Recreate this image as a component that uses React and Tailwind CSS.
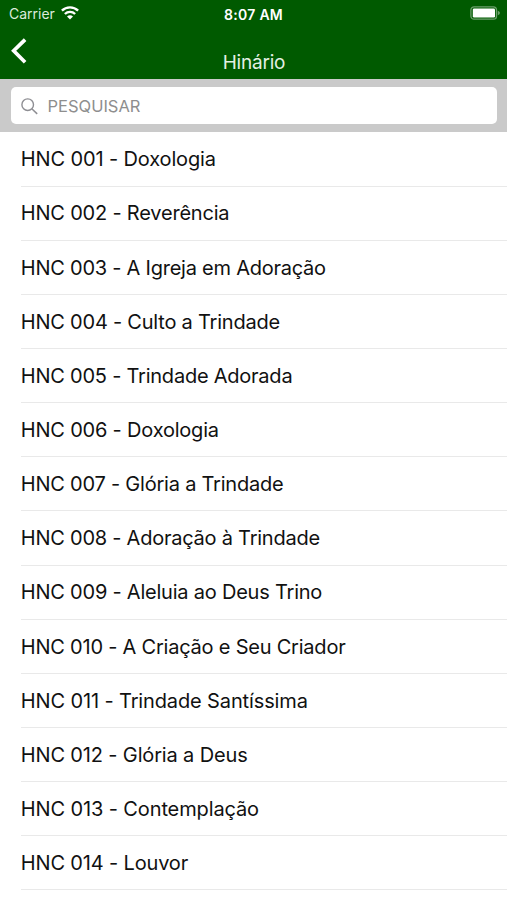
import { useState } from "react";

const hymns = [
    { title: "HNC 001 - Doxologia", tracking: "tracking-[-0.13px]" },
    { title: "HNC 002 - Reverência", tracking: "tracking-[-0.2px]" },
    { title: "HNC 003 - A Igreja em Adoração", tracking: "tracking-[-0.24px]" },
    { title: "HNC 004 - Culto a Trindade", tracking: "tracking-[-0.22px]" },
    { title: "HNC 005 - Trindade Adorada", tracking: "tracking-[-0.23px]" },
    { title: "HNC 006 - Doxologia", tracking: "tracking-[-0.2px]" },
    { title: "HNC 007 - Glória a Trindade", tracking: "tracking-[-0.22px]" },
    { title: "HNC 008 - Adoração à Trindade", tracking: "tracking-[-0.24px]" },
    { title: "HNC 009 - Aleluia ao Deus Trino", tracking: "tracking-[-0.22px]" },
    { title: "HNC 010 - A Criação e Seu Criador", tracking: "tracking-[-0.22px]" },
    { title: "HNC 011 - Trindade Santíssima", tracking: "tracking-[-0.13px]" },
    { title: "HNC 012 - Glória a Deus", tracking: "tracking-[-0.15px]" },
    { title: "HNC 013 - Contemplação", tracking: "tracking-[-0.12px]" },
    { title: "HNC 014 - Louvor", tracking: "tracking-[-0.16px]" },
];

function WifiIcon() {
    return (
        <svg width="18" height="14" viewBox="0 0 18 14" fill="none">
            <path
                d="M.9 4.7a11.6 11.6 0 0 1 16.2 0M3.9 8a7.3 7.3 0 0 1 10.2 0"
                stroke="white"
                strokeWidth="2.4"
            />
            <path d="M9 13.6 6 10.6a4.3 4.3 0 0 1 6 0z" fill="white" />
        </svg>
    );
}

function BatteryIcon() {
    return (
        <svg width="31" height="14" viewBox="0 0 31 14" fill="none">
            <rect
                x="0.9"
                y="0.8"
                width="25.6"
                height="12.4"
                rx="3.2"
                stroke="white"
                strokeOpacity="0.42"
                strokeWidth="1.3"
            />
            <rect x="2.8" y="2.4" width="22.2" height="9.2" rx="1.3" fill="white" />
            <path d="M27.8 4.8c2.8.8 2.8 3.6 0 4.4z" fill="white" fillOpacity="0.42" />
        </svg>
    );
}

function BackIcon() {
    return (
        <svg width="16" height="26" viewBox="0 0 16 26" fill="none">
            <path d="M14.1 1.6 2.7 12.8l11.4 11.4" stroke="white" strokeWidth="3.7" />
        </svg>
    );
}

function SearchIcon() {
    return (
        <svg width="17" height="17" viewBox="0 0 17 17" fill="none">
            <circle cx="6.7" cy="6.7" r="5.8" stroke="#8e8e93" strokeWidth="1.4" />
            <path d="m10.8 10.8 5.4 5.1" stroke="#8e8e93" strokeWidth="1.5" />
        </svg>
    );
}

export default function App() {
    const [search, setSearch] = useState("");

    const filtered = hymns.filter((hymn) =>
        hymn.title.toLowerCase().includes(search.toLowerCase())
    );

    return (
        <div className="h-[900px] w-[507px] overflow-hidden bg-white font-['Inter',sans-serif]">
            <header className="h-[79px] bg-[#005a00] text-white">
                <div className="grid h-[27px] grid-cols-3 items-center pr-[6px] pl-[9px] text-[14px]">
                    <div className="flex items-center gap-[6px]">
                        <span className="text-[#dcebdc]">Carrier</span>
                        <span className="pb-[2px]">
                            <WifiIcon />
                        </span>
                    </div>
                    <span className="pt-px pr-[3px] text-center text-[14px] font-semibold tracking-[0.3px]">
                        8:07 AM
                    </span>
                    <div className="flex justify-end pb-px">
                        <BatteryIcon />
                    </div>
                </div>
                <div className="grid h-[52px] grid-cols-3 pl-[11px] pr-[10px]">
                    <button type="button" aria-label="Voltar" className="mt-[11px] h-[26px] w-4">
                        <BackIcon />
                    </button>
                    <h1 className="pt-[22px] text-center text-[19px] leading-[28px] tracking-[-0.2px] text-[#e4f0e4]">
                        Hinário
                    </h1>
                </div>
            </header>

            <div className="h-[53px] bg-[#cacaca] px-[10.5px] pt-[8.4px]">
                <label className="flex h-[37px] items-center gap-[10px] rounded-[5px] bg-white pl-[10px]">
                    <span className="pt-px">
                        <SearchIcon />
                    </span>
                    <input
                        value={search}
                        onChange={(e) => setSearch(e.target.value)}
                        placeholder="PESQUISAR"
                        className="min-w-0 flex-1 text-[16.5px] outline-none placeholder:text-[#8e8e8e]"
                    />
                </label>
            </div>

            <ul className="pt-[0.4px] pl-[20.5px]">
                {filtered.map((hymn) => (
                    <li
                        key={hymn.title}
                        className="flex h-[54.15px] items-center border-b border-[#e9e9e9] pt-[0.6px] pl-[0.3px] text-[20px] text-[#111111]"
                    >
                        <span className={hymn.tracking}>{hymn.title}</span>
                    </li>
                ))}
            </ul>
        </div>
    );
}
